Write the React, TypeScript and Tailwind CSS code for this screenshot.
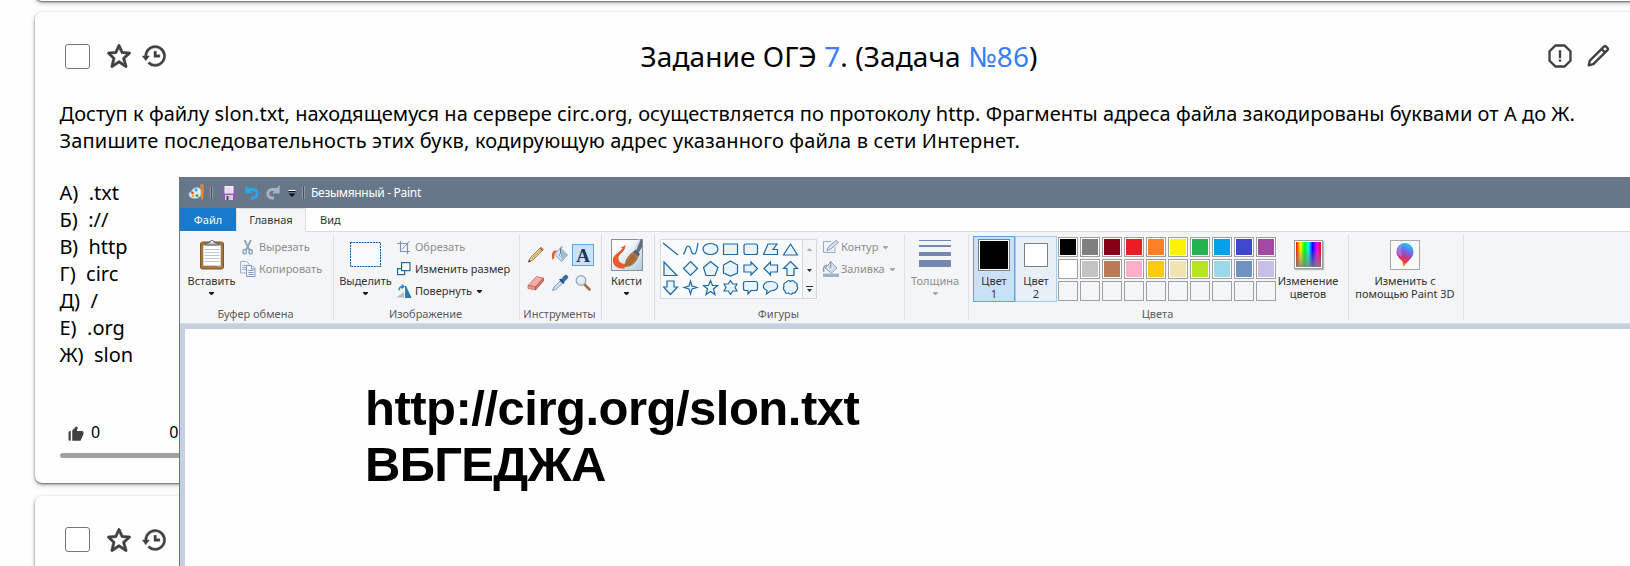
import React from "react";
import { BiStar, BiHistory, BiErrorAlt, BiPencil, BiSolidLike } from "react-icons/bi";

type Kids = { children?: React.ReactNode };

const OPTIONS: [string, string][] = [
  ["А)", ".txt"],
  ["Б)", "://"],
  ["В)", "http"],
  ["Г)", "circ"],
  ["Д)", "/"],
  ["Е)", ".org"],
  ["Ж)", "slon"],
];

function TaskTools() {
  return (
    <div className="flex items-center">
      <span className="h-[25px] w-[25px] rounded-[3px] border border-[#767676] bg-white" />
      <BiStar className="ml-[15px] stroke-[#404040] stroke-[0.5]" size={28} />
      <BiHistory className="ml-[7px] stroke-[#404040] stroke-[0.4]" size={28} />
    </div>
  );
}

function TaskCard({ children, className }: Kids & { className: string }) {
  return (
    <section
      className={`w-[1608px] shrink-0 rounded-[7px] bg-[#fefefe] shadow-[0_1px_2px_rgba(0,0,0,0.5),0_2px_5px_rgba(0,0,0,0.25)] ${className}`}
    >
      {children}
    </section>
  );
}

function Arrow({ muted, className = "" }: { muted?: boolean; className?: string }) {
  return (
    <svg width="5" height="3" viewBox="0 0 5 3" className={`shrink-0 ${className}`}>
      <path d="M0 0h5v1L3 3H2L0 1z" fill={muted ? "#a9a9ab" : "#1d1d1d"} />
    </svg>
  );
}

function Group({ label, width, children }: Kids & { label?: string; width: string }) {
  return (
    <div className={`flex h-[91px] shrink-0 ${width}`}>
      <div className="flex min-w-0 flex-1 flex-col">
        <div className="flex h-[75px]">{children}</div>
        <div className="pr-[2px] text-center leading-[14px] whitespace-nowrap text-[#5c5c5c]">{label}</div>
      </div>
      <div className="mt-[2px] h-[86px] w-px bg-[#dfe1e4]" />
    </div>
  );
}

function BigButton({ icon, lines, arrow, muted, width }: {
  icon: React.ReactNode; lines: string[]; arrow?: boolean; muted?: boolean; width: string;
}) {
  return (
    <div className={`flex shrink-0 flex-col items-center ${width}`}>
      <div className="flex h-[42px] items-start">{icon}</div>
      {lines.map((l) => (
        <span key={l} className={`leading-[13px] whitespace-nowrap ${muted ? "text-[#8d8d8f]" : "text-[#333]"}`}>{l}</span>
      ))}
      {arrow && <Arrow muted={muted} className="mt-[5px]" />}
    </div>
  );
}

function Row({ icon, text, muted, arrow }: { icon: React.ReactNode; text: string; muted?: boolean; arrow?: boolean }) {
  return (
    <div className="flex h-[22px] items-center">
      <span className="flex w-[19px] shrink-0 items-center">{icon}</span>
      <span className={`whitespace-nowrap ${muted ? "text-[#8d8d8f]" : "text-[#333]"}`}>{text}</span>
      {arrow && <Arrow muted={muted} className="ml-[5px]" />}
    </div>
  );
}

const Clipboard = () => (
  <svg width="26" height="32" viewBox="0 0 26 32" className="mt-[6px]">
    <rect x="1.5" y="4" width="23" height="27" rx="2" fill="#a97840" stroke="#7d5526" />
    <rect x="4" y="7" width="18" height="21" fill="#fff" stroke="#8f7049" strokeWidth=".6" />
    <path d="M5.500 11.500h15M5.500 14.500h15M5.500 17.500h15M5.500 20.500h15M5.500 23.500h15" stroke="#b9c6cf" />
    <path d="M6.500 7V5.500l4-1a2.600 2.600 0 0 1 5 0l4 1V7z" fill="#bfc3c7" stroke="#55585c" />
    <circle cx="13" cy="4" r="1" fill="#fff" />
    <path d="M22 26v2.500h-4z" fill="#c9cdd0" />
  </svg>
);

const Scissors = () => (
  <svg width="16" height="16" viewBox="0 0 16 16" fill="none" stroke="#8ea2bf">
    <path d="M4.500 1 9.500 11M11 1 6 11" strokeWidth="1.800" />
    <ellipse cx="4.700" cy="12.700" rx="1.700" ry="2.200" strokeWidth="1.400" />
    <ellipse cx="10.600" cy="12.700" rx="1.700" ry="2.200" strokeWidth="1.400" />
  </svg>
);

const Copy = () => (
  <svg width="16" height="16" viewBox="0 0 16 16" fill="#f2f6fb" stroke="#9db0cc">
    <path d="M.5 .5h6l2.500 2.500v9h-8.500z" />
    <path d="M2 4.500h4M2 6.500h4M2 8.500h4" />
    <path d="M6.500 4.500h5.500l3 3v8h-8.500z" stroke="#8299ba" />
    <path d="M11.500 4.500v3.500h3.500M8.500 9.500h5M8.500 11.500h5M8.500 13.500h5" stroke="#8299ba" />
  </svg>
);

const Crop = () => (
  <svg width="14" height="14" viewBox="0 0 14 14" className="ml-px" fill="none" stroke="#8495b3">
    <path d="M3.500 1v10.500H13M0 3.500h10.500V14" strokeWidth="1.200" />
    <path d="M12.500 1 5 9.500" />
  </svg>
);

const Resize = () => (
  <svg width="14" height="14" viewBox="0 0 14 14" className="ml-px" stroke="#1f6aa5" fill="#fff">
    <rect x=".6" y="6.600" width="7" height="6" strokeWidth="1.200" />
    <rect x="4.600" y=".6" width="8.400" height="8" strokeWidth="1.200" />
  </svg>
);

const Rotate = () => (
  <svg width="16" height="15" viewBox="0 0 16 15">
    <path d="M0 13.500 8 8v5.500z" fill="#b9bcc0" />
    <path d="M9.500 2v11.500H15z" fill="#2a7ab5" stroke="#155a8e" strokeWidth=".7" />
    <path d="M3 6.500C3 3 4.500 2.500 7 2.500M5.500 .5 8 2.500 5.500 4.600" fill="none" stroke="#2b83c9" strokeWidth="1.300" />
  </svg>
);

const Pencil = () => (
  <svg width="18" height="18" viewBox="0 0 18 18">
    <path d="m1.500 16 1.800-4.200L12.800 2.300l2.400 2.400L5.700 14.200z" fill="#f0d48a" stroke="#7d6540" strokeWidth=".8" />
    <path d="m12.800 2.300 1.200-1.100 2.300 2.400-1.100 1.100z" fill="#d86a60" stroke="#8f443e" strokeWidth=".6" />
    <path d="m4.500 13 9-9" stroke="#b38a3c" strokeWidth=".8" />
    <path d="m1.300 16.300.8-2.500 1.700 1.700z" fill="#333" />
  </svg>
);

const Bucket = () => (
  <svg width="18" height="18" viewBox="0 0 18 18">
    <path d="m3.500 8 6-6 7 7-6 6.500z" fill="#d3e5f3" stroke="#6c8aa4" strokeWidth=".8" />
    <path d="m10 3.500 5.800 5.600-5.300 5.400z" fill="#93bfe0" />
    <path d="M9.500 9V2.500A1.300 1.300 0 0 1 11.500 1.200" fill="none" stroke="#6c7780" />
    <circle cx="9.500" cy="9" r="1.200" fill="#fff" stroke="#6c7780" strokeWidth=".6" />
    <path d="M6 4.500C2 4 .3 6 1.300 13.500c1.700 0 2.400-2 2-5.500z" fill="#e2562a" />
  </svg>
);

const Eraser = () => (
  <svg width="18" height="16" viewBox="0 0 18 16">
    <path d="M1 10.500 9.500 1.500l7 1.500-8 9z" fill="#f3a9a5" stroke="#b5605c" strokeWidth=".7" />
    <path d="m1 10.500 7.500 1.500v3L1 13.500z" fill="#e89590" stroke="#b5605c" strokeWidth=".7" />
    <path d="m8.500 12 8-9v3l-8 9z" fill="#d4746f" stroke="#a3504c" strokeWidth=".7" />
  </svg>
);

const Picker = () => (
  <svg width="18" height="18" viewBox="0 0 18 18">
    <path d="M1.500 16.500 3 13l6-6 2.300 2.300-6 6z" fill="#c9def0" stroke="#708da8" strokeWidth=".8" />
    <path d="m8 5.500 1.500-1 4 4-1 1.500z" fill="#1d4f80" />
    <path d="M10.500 5.500 13.500 1.800a1.900 1.900 0 0 1 2.700 2.700L12.800 7.800z" fill="#2f6fae" stroke="#1b4876" strokeWidth=".7" />
  </svg>
);

const Magnifier = () => (
  <svg width="18" height="18" viewBox="0 0 18 18">
    <path d="m10.500 10.500 5 5" stroke="#a2714c" strokeWidth="2.600" strokeLinecap="round" />
    <circle cx="7" cy="6.500" r="4.800" fill="#dcebf8" stroke="#9aa5b0" strokeWidth="1.300" />
    <path d="M4.500 6A2.700 2.700 0 0 1 7 3.700" fill="none" stroke="#fff" />
  </svg>
);

const Brush = () => (
  <svg width="32" height="32" viewBox="0 0 32 32" className="mt-[7px]">
    <defs>
      <linearGradient id="brushBg" x1="0" y1="0" x2="1" y2="1">
        <stop offset=".3" stopColor="#fbfcfd" />
        <stop offset="1" stopColor="#a9cde2" />
      </linearGradient>
    </defs>
    <rect x=".5" y=".5" width="31" height="31" fill="url(#brushBg)" stroke="#8d8f93" />
    <path d="M13.500 6.500C15 10 9 13 6.500 17 4.500 21 8 27 14 26" fill="none" stroke="#ec6133" strokeWidth="1.600" />
    <path d="M9.500 9c3-2 5-2 4 1-1 3-5 4.500-6 8-.5 3 1 7 7 7l-1 4.500C5 30 1 25 2 19.500 3 15.500 9 13 11.500 9z" fill="#ea5a2c" />
    <path d="m24 13 5.500-12.500H31V8l-4 7z" fill="#5f6e80" />
    <path d="m24 11.500 4.500-11" stroke="#d5dde5" strokeWidth="2" />
    <path d="m21.500 13.500 3-3 4.500 4.500-2 3z" fill="#56616d" />
    <path d="M13 28c1-3 1-9 8-14.500 3 0 6 3 6 5.500-3 6-8 9.500-14 9z" fill="#ad7340" />
    <path d="M15 26c2-2 5-5 7-10M18 26c2-2 4-4 6-8" stroke="#7d4c23" fill="none" strokeWidth=".7" />
  </svg>
);

const SHAPES = [
  "M1 2 16 14",
  "M1 13C4 13 3 5 6 5c4 0 2 8 6 8 3 0 3-7 4-11",
  "M8.500 2.500c10 0 10 11 0 11s-10-11 0-11z",
  "M1.500 3h14v10.500h-14z",
  "M4 3h9.500q2 0 2 2v6.500q0 2-2 2H4q-2 0-2-2V5q0-2 2-2z",
  "M6 3h9l-4 5.500h4.500V13.500H1.500z",
  "M8.500 3 15.500 14h-14z",
  "M2 2 15 15.500H2z",
  "M8.500 1.500 15.500 8.500 8.500 15.500 1.500 8.500z",
  "M8.500 1.500 16 7.500 13 15.500H4L1.500 7.500z",
  "M8.500 1 15.500 5v8l-7 3-7-3V5z",
  "M2 5h7V2l6.500 6.500L9 15v-3H2z",
  "M15.500 5h-7V2L2 8.500 8.500 15v-3h7z",
  "M8.500 1.500 15.500 8.500h-3.500v7H5v-7H1.500z",
  "M5 2h7v6h3.500L8.500 15.500 1.500 8h3.500z",
  "M8.500 2 10 7l5 1.500-5 1.500-1.500 5L7 10 2 8.500 7 7z",
  "M8.500 1.500 10.500 6.500h5L11.500 10l1.500 5.500-4.500-3-4.500 3L5.500 10l-4-3.500h5z",
  "M8.500 1.500 10.800 5h4.200l-2 3.500 2 3.500h-4.200L8.500 15.500 6.200 12H2l2-3.500L2 5h4.200z",
  "M3.500 2.500h10q2 0 2 2v5q0 2-2 2H9l-3 3.500v-3.500H3.500q-2 0-2-2v-5q0-2 2-2z",
  "M8.500 2.500c9 0 10 9 0 9.500L4.500 15l.5-3.500C-1 9 1 2.500 8.500 2.500z",
  "M4 3.500q2-3 4.500-1 3-2 4.500 1 3 1 2 3.500 1.500 3-.5 4.500-1 3-3.500 2.500-2.500 2.500-4.500 0-3.500 1-3.500-2Q.5 10 2 7.500 1 4 4 3.500z",
];

const OutlineIcon = () => (
  <svg width="18" height="16" viewBox="0 0 18 16">
    <path d="M9 2.500H1.500v11H13V8" fill="#eef2f7" stroke="#9aa9c0" />
    <path d="M5 11.500 6 8.500 14 1.500 16.500 3.500 8 10.500z" fill="#dce4ee" stroke="#8496b2" />
  </svg>
);

const FillIcon = () => (
  <svg width="18" height="18" viewBox="0 0 18 18">
    <path d="m3 8 6-6 6 6-5.500 5z" fill="#d5deea" stroke="#8fa0ba" />
    <path d="M8.500 8V1M5 5C1 6 1 9 2 12" fill="none" stroke="#8fa0ba" strokeWidth="1.500" />
    <path d="M1 13.500h16V17H1z" fill="#a0b1cb" />
  </svg>
);

const PALETTE = [
  ["bg-black", "bg-[#7f7f7f]", "bg-[#880015]", "bg-[#ed1c24]", "bg-[#ff7f27]", "bg-[#fff200]", "bg-[#22b14c]", "bg-[#00a2e8]", "bg-[#3f48cc]", "bg-[#a349a4]"],
  ["bg-white", "bg-[#c3c3c3]", "bg-[#b97a57]", "bg-[#ffaec9]", "bg-[#ffc90e]", "bg-[#efe4b0]", "bg-[#b5e61d]", "bg-[#99d9ea]", "bg-[#7092be]", "bg-[#c8bfe7]"],
  ["", "", "", "", "", "", "", "", "", ""],
];

function Palette() {
  return (
    <div className="mt-[5px] ml-px grid grid-cols-[repeat(10,20px)] content-start gap-[2px]">
      {PALETTE.flat().map((c, i) => (
        <span key={i} className={`h-[20px] w-[20px] border border-[#a0a0a0] ${c ? "bg-white p-px" : ""}`}>
          {c && <span className={`block h-full w-full ${c}`} />}
        </span>
      ))}
    </div>
  );
}

const Spectrum = () => (
  <span className="mt-[8px] block h-[29px] w-[29px] border border-[#9b9b9b] bg-white p-px shadow-[1px_1px_1px_rgba(0,0,0,0.25)]">
    <span className="block h-full w-full bg-[linear-gradient(to_bottom,transparent_20%,rgba(128,128,128,0.85)),linear-gradient(to_right,#f00,#ff0_18%,#0f0_34%,#0ff_50%,#00f_66%,#f0f_84%,#f00)]" />
  </span>
);

const Paint3D = () => (
  <span className="mt-[8px] flex h-[30px] w-[30px] items-center justify-center border border-[#a9a9a9] bg-[#f8f8f8]">
    <svg width="18" height="26" viewBox="0 0 18 26">
      <defs>
        <linearGradient id="drop" x1=".7" y1="0" x2=".4" y2="1">
          <stop offset="0" stopColor="#19d3ee" />
          <stop offset=".35" stopColor="#6a6be8" />
          <stop offset=".62" stopColor="#d4317f" />
          <stop offset=".8" stopColor="#e8453c" />
          <stop offset="1" stopColor="#ffc21a" />
        </linearGradient>
      </defs>
      <path d="M9 1a8.500 8.500 0 0 1 8.500 8.500c0 7-6 9-10 15.500-1-1 0-4-1.500-6C3.500 16.500.5 14 .5 9.500A8.500 8.500 0 0 1 9 1z" fill="url(#drop)" />
      <path d="M1 9a8 8 0 0 1 5-7c-1 4-1 9 0 13-3-1-5-3-5-6z" fill="#a78bff" opacity=".6" />
    </svg>
  </span>
);

const BarDivider = ({ className }: { className: string }) => (
  <span className={`h-[13px] w-[3px] border-x border-[#8e98a6] bg-[#444e5c] ${className}`} />
);

function TitleBar() {
  return (
    <div className="flex h-[31px] items-center bg-[#687689] text-white">
      <svg width="18" height="18" viewBox="0 0 18 18" className="-mt-[2px] ml-[8px]">
        <path d="M8 4.500c4-.5 6 2 5.500 6-.5 3.500-3.500 5-7 5C2.500 15.500.5 13 1 10.500c0-1.500 2-1 2.500-2C4 7 5 5 8 4.500z" fill="#d7ecf8" stroke="#7fb4d6" strokeWidth=".7" />
        <circle cx="8" cy="7" r="1.400" fill="#2e9ad6" />
        <circle cx="4.500" cy="10" r="1.400" fill="#e04b3a" />
        <circle cx="5" cy="13" r="1.300" fill="#efb023" />
        <circle cx="9" cy="12.500" r="1.500" fill="#4aa84a" />
        <path d="M12.500 6h3L15 16.500h-2z" fill="#f08b24" />
        <path d="M12.500 6 12 2l2-1.500L16 2l-.5 4z" fill="#c98750" />
      </svg>
      <BarDivider className="ml-[4px]" />
      <svg width="14" height="14" viewBox="0 0 14 14" className="ml-[9px]">
        <path d="M0 0h14v14H1.500L0 12.500z" fill="#8d5cb0" />
        <path d="M2.500 0h9v7.500h-9z" fill="#f7f3fa" />
        <path d="M3.500 2h7M3.500 4h7M3.500 6h7" stroke="#cdb9da" strokeWidth=".8" />
        <path d="M3 9h8v5H3z" fill="#d8cbe2" />
        <path d="M4.500 10h2v4h-2z" fill="#5c3778" />
      </svg>
      <svg width="14" height="15" viewBox="0 0 14 15" className="ml-[9px]" fill="none" stroke="#30a2ea">
        <path d="M2 4.500h6a4.200 4.200 0 0 1 0 8.400H6" strokeWidth="3" />
        <path d="M.3 0v8.500H8z" fill="#30a2ea" stroke="none" />
      </svg>
      <svg width="14" height="15" viewBox="0 0 14 15" className="ml-[7px]" fill="none" stroke="#a6b2c1">
        <path d="M12 4.500H6a4.200 4.200 0 0 0 0 8.400H8" strokeWidth="3" />
        <path d="M13.700 0v8.500H6z" fill="#a6b2c1" stroke="none" />
      </svg>
      <svg width="8" height="7" viewBox="0 0 8 7" className="mt-[2px] ml-[8px]">
        <path d="M.5 0h7v1h-7z" fill="#fff" />
        <path d="M.5 1h7v1h-7zM.5 3.500h7L4 7z" fill="#111" />
      </svg>
      <BarDivider className="ml-[6px]" />
      <span className="ml-[6px] text-[12px] leading-[16px] tracking-[-0.3px] whitespace-nowrap">Безымянный - Paint</span>
    </div>
  );
}

function Tabs() {
  return (
    <div className="flex h-[24px] text-[#333]">
      <span className="flex h-[23px] w-[56px] items-center justify-center bg-[#1979ca] text-white">Файл</span>
      <span className="flex w-[70px] items-center justify-center border-x border-t border-[#dcdee1] bg-[#f4f5f7] pb-px">Главная</span>
      <span className="flex flex-1 items-center border-b border-[#dadbdc] pl-[14px]">Вид</span>
    </div>
  );
}

function Ribbon() {
  return (
    <div className="flex h-[92px] border-b border-[#d9dbde] bg-[#f4f5f7]">
      <Group label="Буфер обмена" width="w-[154px]">
        <BigButton width="w-[63px]" icon={<Clipboard />} lines={["Вставить"]} arrow />
        <div className="-ml-[3px] flex flex-col pt-[4px]">
          <Row icon={<Scissors />} text="Вырезать" muted />
          <Row icon={<Copy />} text="Копировать" muted />
        </div>
      </Group>
      <Group label="Изображение" width="w-[186px]">
        <BigButton
          width="w-[63px]"
          icon={
            <svg width="31" height="25" viewBox="0 0 31 25" className="mt-[10px]">
              <rect x=".5" y=".5" width="30" height="24" fill="#f8fbfe" stroke="#0f5d9f" strokeWidth="1.100" strokeDasharray="2 .8" />
            </svg>
          }
          lines={["Выделить"]}
          arrow
        />
        <div className="-ml-px flex flex-col pt-[4px]">
          <Row icon={<Crop />} text="Обрезать" muted />
          <Row icon={<Resize />} text="Изменить размер" />
          <Row icon={<Rotate />} text="Повернуть" arrow />
        </div>
      </Group>
      <Group label="Инструменты" width="w-[82px]">
        <div className="mt-[12px] ml-[4px] grid h-[50px] grid-cols-[24px_24px_22px] grid-rows-[22px_22px] items-center justify-items-center gap-y-[6px]">
          <Pencil />
          <Bucket />
          <span className="flex h-[22px] w-[22px] items-center justify-center border border-[#62a2e4] bg-[#c9e0f7] font-['Liberation_Serif',serif] text-[19px] leading-none font-bold text-[#1d3557]">A</span>
          <Eraser />
          <Picker />
          <Magnifier />
        </div>
      </Group>
      <Group width="w-[53px]">
        <BigButton width="w-[49px]" icon={<Brush />} lines={["Кисти"]} arrow />
      </Group>
      <Group label="Фигуры" width="w-[250px]">
        <div className="mt-[7px] ml-[5px] flex h-[60px] w-[157px] shrink-0 border border-[#d5d8dc] bg-[#f9fafc]">
          <div className="grid w-[141px] grid-cols-7 grid-rows-3 pt-px pl-px">
            {SHAPES.map((d, i) => (
              <svg key={i} width="18" height="18" viewBox="0 0 18 18">
                <path d={d} fill={i < 2 ? "none" : "#e9f4fa"} stroke="#1c69a8" strokeWidth="1.200" />
              </svg>
            ))}
          </div>
          <div className="flex flex-1 flex-col items-center border-l border-[#d5d8dc] bg-[#f4f5f7]">
            <svg width="13" height="58" viewBox="0 0 13 58">
              <path d="M4 11h5L6.500 8z" fill="#a9a9ab" />
              <path d="M4 29h5l-2.500 3zM4 49h5l-2.500 3z" fill="#1e3650" />
              <path d="M3 46.500h7" stroke="#1e3650" />
            </svg>
          </div>
        </div>
        <div className="ml-[5px] flex flex-col pt-[4px]">
          <Row icon={<OutlineIcon />} text="Контур" muted arrow />
          <Row icon={<FillIcon />} text="Заливка" muted arrow />
        </div>
      </Group>
      <Group width="w-[64px]">
        <BigButton
          width="w-[60px]"
          icon={
            <svg width="32" height="28" viewBox="0 0 32 28" className="mt-[8px]" fill="#7488b0">
              <path d="M0 0h32v1H0zM0 5h32v2H0zM0 12h32v4H0zM0 20h32v7H0z" />
            </svg>
          }
          lines={["Толщина"]}
          arrow
          muted
        />
      </Group>
      <Group label="Цвета" width="w-[380px]">
        <div className="mt-[4px] ml-[4px] flex h-[66px] w-[42px] shrink-0 flex-col items-center border border-[#62a2e4] bg-[#c9e0f7] leading-[13px] text-[#333]">
          <span className="mt-[2px] mb-[3px] h-[32px] w-[32px] border border-[#7f7f7f] bg-black outline-1 -outline-offset-2 outline-white" />
          <span>Цвет</span>
          <span>1</span>
        </div>
        <div className="mt-[4px] flex h-[66px] w-[42px] shrink-0 flex-col items-center border border-[#a4cdf5] bg-[#e8eff7] leading-[13px] text-[#333]">
          <span className="mt-[6px] mb-[7px] h-[24px] w-[24px] border border-[#7f7f7f] bg-white" />
          <span>Цвет</span>
          <span>2</span>
        </div>
        <Palette />
        <BigButton width="w-[62px] ml-[1px]" icon={<Spectrum />} lines={["Изменение", "цветов"]} />
      </Group>
      <Group width="w-[115px]">
        <BigButton width="w-[112px]" icon={<Paint3D />} lines={["Изменить с", "помощью Paint 3D"]} />
      </Group>
    </div>
  );
}

function PaintWindow() {
  return (
    <div className="absolute top-[177px] left-[179px] flex h-[389px] w-[1451px] flex-col overflow-hidden border-l border-[#687689] bg-[#fefefe] text-[11px] leading-[14px]">
      <TitleBar />
      <Tabs />
      <Ribbon />
      <div className="flex-1 bg-[#c6cfdf] pt-[5px] pl-[5px]">
        <div className="h-full bg-[#fefefe] pt-[51px] pl-[180px] font-['Liberation_Sans',sans-serif] text-[49px] leading-[56px] font-bold text-black">
          <div className="tracking-[-0.5px]">http://cirg.org/slon.txt</div>
          <div className="tracking-[-0.7px]">ВБГЕДЖА</div>
        </div>
      </div>
    </div>
  );
}

export default function App() {
  return (
    <div className="relative h-[566px] w-[1630px] overflow-hidden bg-[#fefefe] font-['Noto_Sans',sans-serif] text-black">
      <main className="flex flex-col pl-[35px] text-[#404040]">
        <TaskCard className="-mt-[20px] h-[21px]" />
        <TaskCard className="mt-[11px] h-[471px] px-[25px]">
          <header className="grid h-[88px] grid-cols-[1fr_auto_1fr] items-center">
            <div className="pl-[5px]"><TaskTools /></div>
            <h1 className="text-[28px] tracking-[0.1px] whitespace-nowrap text-black">
              Задание ОГЭ <span className="text-[#3b7cf8]">7</span>. (Задача <span className="text-[#3b7cf8]">№86</span>)
            </h1>
            <div className="flex justify-end gap-[10px] pr-[6px]">
              <BiErrorAlt size={28} />
              <BiPencil size={28} />
            </div>
          </header>
          <div className="-ml-[0.5px] text-[20px] leading-[27px] whitespace-nowrap text-black">
            <p className="tracking-[0.05px]">
              Доступ к файлу slon.txt, находящемуся на сервере circ.org, осуществляется по протоколу http. Фрагменты адреса файла закодированы буквами от А до Ж.
            </p>
            <p className="tracking-[0.178px]">
              Запишите последовательность этих букв, кодирующую адрес указанного файла в сети Интернет.
            </p>
          </div>
          <div className="mt-[25px] -ml-[0.5px] text-[20px] leading-[27px] whitespace-pre text-black">
            {OPTIONS.map(([k, v]) => (
              <div key={k}>{`${k}  ${v}`}</div>
            ))}
          </div>
          <div className="mt-[52px] flex h-[24px] items-center pl-[7px] text-[16px] text-black">
            <BiSolidLike size={18} className="mt-[3px] text-[#404040]" />
            <span className="ml-[6px]">0</span>
            <span className="ml-[69px]">0</span>
          </div>
          <div className="mt-[9px] h-[5px] rounded-full bg-[#a0a0a0]" />
        </TaskCard>
        <TaskCard className="mt-[13px] h-[471px] px-[25px]">
          <header className="flex h-[87px] items-center pl-[5px]"><TaskTools /></header>
        </TaskCard>
      </main>
      <PaintWindow />
    </div>
  );
}
